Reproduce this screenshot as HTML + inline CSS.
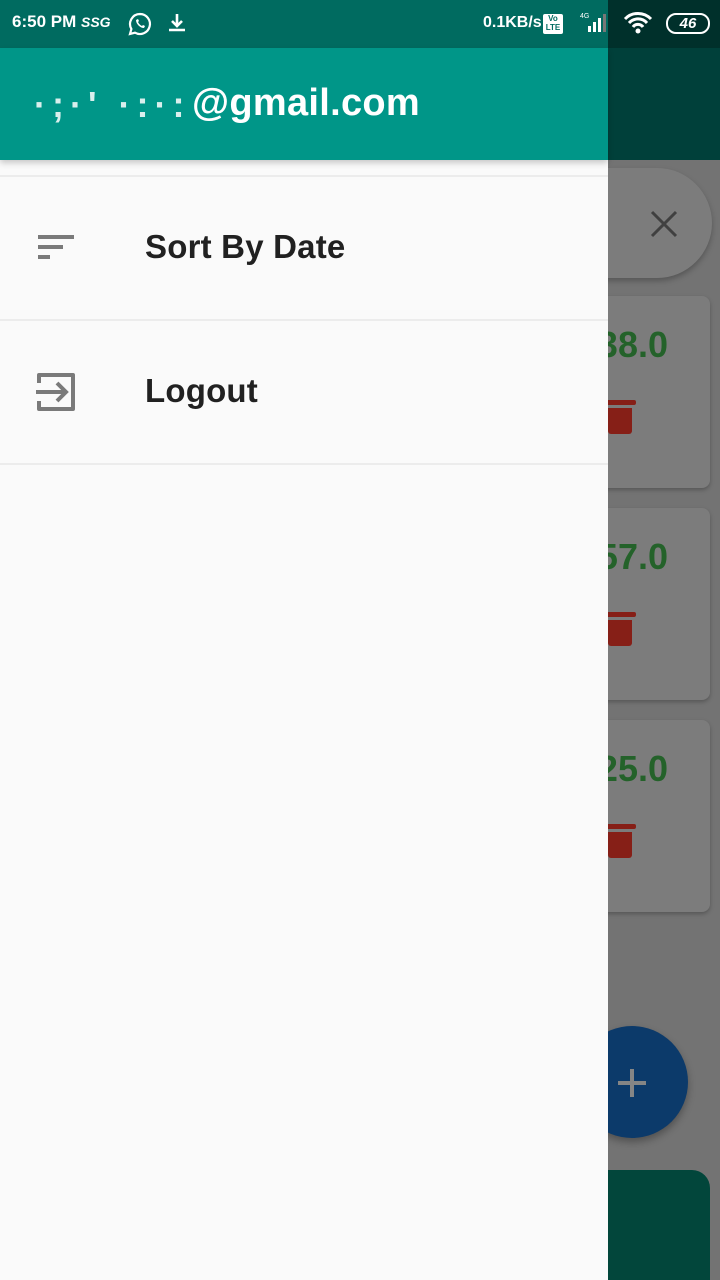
<!DOCTYPE html>
<html><head><meta charset="utf-8"><style>
*{margin:0;padding:0;box-sizing:border-box}
html,body{width:720px;height:1280px;overflow:hidden}
body{position:relative;background:#737373;font-family:"Liberation Sans",sans-serif}
.abs{position:absolute}
.card{position:absolute;left:560px;width:150px;background:#7c7c7c;border-radius:8px;box-shadow:0 2px 4px rgba(0,0,0,.25)}
.num{position:absolute;left:0;width:108px;text-align:right;font-size:36px;font-weight:bold;color:#24622a}
.trash{position:absolute;left:48px;width:24px;height:26px;background:#861f17;border-radius:0 0 3px 3px}
.trash:before{content:"";position:absolute;left:-4px;top:-8px;width:32px;height:5px;background:#861f17;border-radius:2px}
.item{position:absolute;left:145px;font-size:33px;font-weight:bold;color:#212121;letter-spacing:0.2px}
.hr{position:absolute;left:0;width:608px;height:2px;background:#ececec}
</style></head><body>
<div class="abs" style="left:608px;top:0;width:112px;height:160px;background:#00403a"></div>
<div class="abs" style="left:420px;top:168px;width:292px;height:110px;border-radius:55px;background:#7c7c7c;box-shadow:0 3px 6px rgba(0,0,0,.25)"></div>
<svg class="abs" style="left:648px;top:208px" width="32" height="32" viewBox="0 0 32 32"><path d="M4 4L28 28M28 4L4 28" stroke="#404040" stroke-width="3"/></svg>
<div class="card" style="top:296px;height:192px"><div class="num" style="top:28px">38.0</div><div class="trash" style="top:112px"></div></div>
<div class="card" style="top:508px;height:192px"><div class="num" style="top:28px">57.0</div><div class="trash" style="top:112px"></div></div>
<div class="card" style="top:720px;height:192px"><div class="num" style="top:28px">25.0</div><div class="trash" style="top:112px"></div></div>
<div class="abs" style="left:576px;top:1026px;width:112px;height:112px;border-radius:50%;background:#0c3a6a;box-shadow:0 4px 8px rgba(0,0,0,.3)"></div>
<svg class="abs" style="left:617px;top:1068px" width="30" height="30"><path d="M15 1V29M1 15H29" stroke="#858585" stroke-width="4"/></svg>
<div class="abs" style="left:560px;top:1170px;width:150px;height:110px;border-radius:18px 18px 0 0;background:#02463b"></div>
<div class="abs" style="left:0;top:0;width:608px;height:48px;background:#006b60"></div>
<div class="abs" style="left:608px;top:0;width:112px;height:48px;background:#00302b"></div>
<div class="abs" style="left:12px;top:12px;color:#fff;font-size:17px;font-weight:bold">6:50 PM <i style="font-size:14px;font-weight:bold">SSG</i></div>
<svg class="abs" style="left:127px;top:11px" width="26" height="26" viewBox="0 0 26 26"><path d="M13 3a10 10 0 0 0-8.6 15L3 23l5-1.3A10 10 0 1 0 13 3z" fill="none" stroke="#fff" stroke-width="2.2"/><path d="M9 9c0 4 4 8 8 8l1-2-2-1-1 1c-2-1-3-2-4-4l1-1-1-2z" fill="#fff"/></svg>
<svg class="abs" style="left:166px;top:12px" width="22" height="22"><path d="M11 2V14M6 9l5 5 5-5M3 18H19" stroke="#fff" stroke-width="2.6" fill="none"/></svg>
<div class="abs" style="left:483px;top:14px;color:#fff;font-size:16px;font-weight:bold">0.1KB/s</div>
<div class="abs" style="left:543px;top:14px;width:20px;height:20px;background:#fff;border-radius:2px;font-size:8px;color:#006b60;text-align:center;line-height:9px;font-weight:bold">Vo<br>LTE</div>
<svg class="abs" style="left:576px;top:10px" width="40" height="24"><text x="4" y="8" font-size="7" fill="#fff" font-family="Liberation Sans">4G</text><rect x="12" y="16" width="3" height="6" fill="#fff"/><rect x="17" y="12" width="3" height="10" fill="#fff"/><rect x="22" y="8" width="3" height="14" fill="#fff"/><rect x="27" y="4" width="3" height="18" fill="#777"/></svg>
<svg class="abs" style="left:622px;top:10px" width="34" height="26"><path d="M3 9a18 18 0 0 1 26 0M7 13a12 12 0 0 1 18 0M11 17a6 6 0 0 1 10 0" stroke="#fff" stroke-width="3" fill="none"/><circle cx="16" cy="21" r="2.5" fill="#fff"/></svg>
<div class="abs" style="left:666px;top:13px;width:44px;height:21px;border:2px solid #fff;border-radius:10px;color:#fff;font-size:15px;font-weight:bold;text-align:center;line-height:17px;font-style:italic">46</div>
<div class="abs" style="left:0;top:48px;width:608px;height:1240px;background:#fafafa"></div>
<div class="abs" style="left:0;top:48px;width:608px;height:112px;background:#009688;box-shadow:0 3px 6px rgba(0,0,0,.2)"></div>
<div class="abs" style="left:34px;top:84px;color:#fff;font-size:36px;font-weight:bold;letter-spacing:0.5px;opacity:.85;letter-spacing:6px">·;·' ·:·:</div>
<div class="abs" style="left:192px;top:82px;color:#fff;font-size:38px;font-weight:bold;letter-spacing:0.3px">@gmail.com</div>
<div class="hr" style="top:175px"></div>
<svg class="abs" style="left:36px;top:234px" width="40" height="28"><path d="M2 3H38M2 13H27M2 23H14" stroke="#7a7a7a" stroke-width="4"/></svg>
<div class="item" style="top:228px">Sort By Date</div>
<div class="hr" style="top:319px"></div>
<svg class="abs" style="left:36px;top:372px" width="40" height="40" viewBox="0 0 40 40"><path d="M3 11V3h34v34H3v-8" stroke="#7a7a7a" stroke-width="4" fill="none" stroke-linejoin="round"/><path d="M0 20H30M21 11l9 9-9 9" stroke="#7a7a7a" stroke-width="4" fill="none"/></svg>
<div class="item" style="top:372px">Logout</div>
<div class="hr" style="top:463px"></div>
</body></html>
